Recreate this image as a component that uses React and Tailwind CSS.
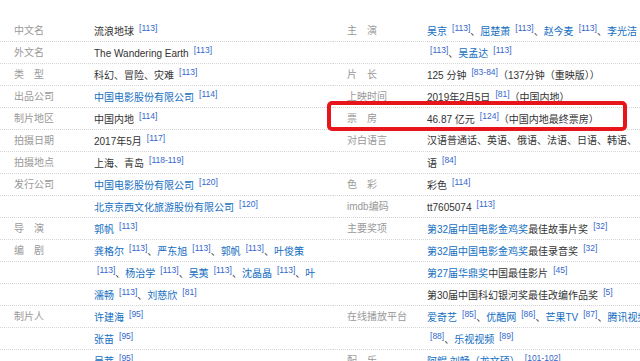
import React from "react";

const S = ({ c, first }) => (
  <span
    className={
      (first ? "ml-[3px] " : "ml-[5px] ") +
      "text-[8.5px] text-[#3366cc] align-[4px] leading-none"
    }
  >
    [{c}]
  </span>
);

const L = ({ children }) => <span className="text-[#136ec2]">{children}</span>;

const Row = ({ label, children }) => (
  <div className="flex h-[22px] items-center border-b border-dotted border-[#d6d6d6] whitespace-nowrap pl-[14px]">
    <div className="w-[80px] shrink-0 text-[#999999]">{label}</div>
    <div className="text-[#333333]">{children}</div>
  </div>
);

export default function App() {
  return (
    <div
      className="relative w-[640px] h-[361px] overflow-hidden bg-white pt-[20px] text-[10px] leading-none"
      style={{ fontFamily: '"Liberation Sans", Arial, "Noto Sans CJK SC", sans-serif' }}
    >
      <div className="flex">
        <div className="w-[333px] shrink-0">
          <Row label="中文名">流浪地球<S c="113" /></Row>
          <Row label="外文名">The Wandering Earth<S c="113" /></Row>
          <Row label="类　型">科幻、冒险、灾难<S c="113" /></Row>
          <Row label="出品公司"><L>中国电影股份有限公司</L><S c="114" /></Row>
          <Row label="制片地区">中国内地<S c="114" /></Row>
          <Row label="拍摄日期">2017年5月<S c="117" /></Row>
          <Row label="拍摄地点">上海、青岛<S c="118-119" /></Row>
          <Row label="发行公司"><L>中国电影股份有限公司</L><S c="120" /></Row>
          <Row label=""><L>北京京西文化旅游股份有限公司</L><S c="120" /></Row>
          <Row label="导　演"><L>郭帆</L><S c="113" /></Row>
          <Row label="编　剧">
            <L>龚格尔</L><S c="113" />、<L>严东旭</L><S c="113" />、<L>郭帆</L><S c="113" />、<L>叶俊策</L>
          </Row>
          <Row label="">
            <S c="113" first />、<L>杨治学</L><S c="113" />、<L>吴荑</L><S c="113" />、<L>沈晶晶</L><S c="113" />、<L>叶</L>
          </Row>
          <Row label="">
            <L>濡畅</L><S c="113" />、<L>刘慈欣</L><S c="81" />
          </Row>
          <Row label="制片人"><L>许建海</L><S c="95" /></Row>
          <Row label=""><L>张苗</L><S c="95" /></Row>
          <Row label=""><L>吴蒂</L><S c="95" /></Row>
        </div>
        <div className="flex-1 min-w-0 overflow-hidden">
          <Row label="主　演">
            <L>吴京</L><S c="113" />、<L>屈楚萧</L><S c="113" />、<L>赵今麦</L><S c="113" />、<L>李光洁</L>
          </Row>
          <Row label="">
            <S c="113" first />、<L>吴孟达</L><S c="113" />
          </Row>
          <Row label="片　长">125 分钟<S c="83-84" />（137分钟（重映版））</Row>
          <Row label="上映时间">2019年2月5日<S c="81" />（中国内地）</Row>
          <Row label="票　房">46.87 亿元<S c="124" />（中国内地最终票房）</Row>
          <Row label="对白语言">汉语普通话、英语、俄语、法语、日语、韩语、</Row>
          <Row label="">语<S c="84" /></Row>
          <Row label="色　彩">彩色<S c="114" /></Row>
          <Row label="imdb编码">tt7605074<S c="113" /></Row>
          <Row label="主要奖项"><L>第32届中国电影金鸡奖</L>最佳故事片奖<S c="32" /></Row>
          <Row label=""><L>第32届中国电影金鸡奖</L>最佳录音奖<S c="32" /></Row>
          <Row label=""><L>第27届华鼎奖</L>中国最佳影片<S c="45" /></Row>
          <Row label="">第30届中国科幻银河奖最佳改编作品奖<S c="5" /></Row>
          <Row label="在线播放平台">
            <L>爱奇艺</L><S c="85" />、<L>优酷网</L><S c="86" />、<L>芒果TV</L><S c="87" />、<L>腾讯视频</L>
          </Row>
          <Row label="">
            <S c="88" first />、<L>乐视视频</L><S c="89" />
          </Row>
          <Row label="配　乐"><L>阿鲲 刘畅（龙文硕）</L><S c="101-102" /></Row>
        </div>
      </div>
      <div className="absolute left-[327px] top-[101px] w-[300px] h-[30px] border-[4px] border-[#e8141b] rounded-[5px]" />
    </div>
  );
}
